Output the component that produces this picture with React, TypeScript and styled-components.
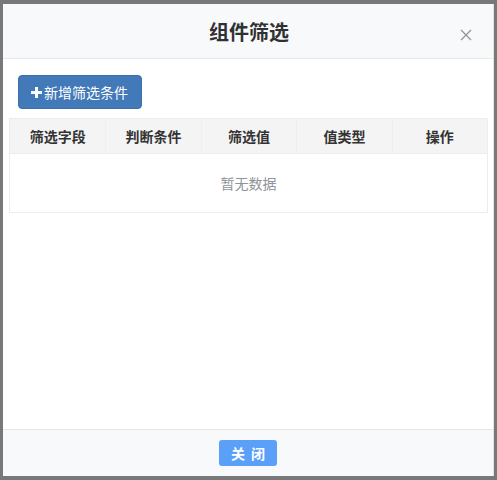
import styled, { createGlobalStyle } from 'styled-components';

const GlobalStyle = createGlobalStyle`
  html, body {
    margin: 0;
    padding: 0;
    background: #787878;
    font-family: "Helvetica Neue", "Liberation Sans", "Noto Sans CJK SC", sans-serif;
  }
`

const Overlay = styled.div`
  width: 497px;
  height: 480px;
  box-sizing: border-box;
  padding: 4px 3px 4px 3px;
  background: #787878;
`

const Modal = styled.div`
  height: 100%;
  display: flex;
  flex-direction: column;
  background: #fff;
  border-right: 1px solid #e4e4e4;
  box-sizing: border-box;
`

const Header = styled.div`
  position: relative;
  height: 55px;
  flex-shrink: 0;
  display: flex;
  align-items: center;
  justify-content: center;
  background: #f8f9fb;
  border-bottom: 1px solid #e8e8e8;
  box-sizing: border-box;
`

const Title = styled.h2`
  margin: 0;
  font-size: 20px;
  font-weight: 700;
  color: #303133;
  padding-left: 2px;
`

const CloseButton = styled.button`
  position: absolute;
  right: 20px;
  top: 24px;
  width: 14px;
  height: 14px;
  padding: 0;
  border: none;
  background: none;
  cursor: pointer;
  display: flex;
`

const Body = styled.div`
  flex: 1;
  padding: 16px 5px 0 6px;
`

const AddButton = styled.button`
  margin-left: 9px;
  height: 34px;
  padding: 0 13px 0 11px;
  background: #4279b8;
  border: 1px solid #3c6fab;
  border-radius: 4px;
  color: #fff;
  font-family: inherit;
  font-size: 14px;
  display: flex;
  align-items: center;
  gap: 1px;
  cursor: pointer;
`

const Table = styled.div`
  margin-top: 9px;
  border: 1px solid #ebedf2;
`

const HeadRow = styled.div`
  display: grid;
  grid-template-columns: repeat(5, 1fr);
  height: 34px;
  background: #f4f4f4;
  border-bottom: 1px solid #ebedf2;
`

const HeadCell = styled.div`
  display: flex;
  align-items: center;
  justify-content: center;
  font-size: 14px;
  font-weight: 700;
  color: #333;
  border-left: 1px solid #eceef3;

  &:first-child {
    border-left: none;
  }
`

const Empty = styled.div`
  height: 58px;
  display: flex;
  align-items: center;
  justify-content: center;
  font-size: 14px;
  color: #909399;
`

const Footer = styled.div`
  height: 47px;
  flex-shrink: 0;
  display: flex;
  align-items: center;
  justify-content: center;
  background: #f8f9fb;
  border-top: 1px solid #e6e6e6;
  box-sizing: border-box;
`

const PrimaryButton = styled.button`
  width: 58px;
  height: 26px;
  background: #5aa0f8;
  border: none;
  border-radius: 3px;
  color: #fff;
  font-family: inherit;
  font-size: 14px;
  font-weight: 700;
  letter-spacing: 6px;
  padding: 0 0 0 6px;
  cursor: pointer;
`

const columns = ['筛选字段', '判断条件', '筛选值', '值类型', '操作'];

export default function App() {
  return (
    <>
      <GlobalStyle />
      <Overlay>
        <Modal>
          <Header>
            <Title>组件筛选</Title>
            <CloseButton aria-label="close">
              <svg width="14" height="14" viewBox="0 0 14 14">
                <path d="M2 2 L12 12 M12 2 L2 12" stroke="#909399" strokeWidth="1.2" fill="none" />
              </svg>
            </CloseButton>
          </Header>
          <Body>
            <AddButton>
              <svg width="13" height="13" viewBox="0 0 13 13">
                <path d="M6.5 1 V12 M1 6.5 H12" stroke="#fff" strokeWidth="3" />
              </svg>
              新增筛选条件
            </AddButton>
            <Table>
              <HeadRow>
                {columns.map((c) => (
                  <HeadCell key={c}>{c}</HeadCell>
                ))}
              </HeadRow>
              <Empty>暂无数据</Empty>
            </Table>
          </Body>
          <Footer>
            <PrimaryButton>关闭</PrimaryButton>
          </Footer>
        </Modal>
      </Overlay>
    </>
  );
}
